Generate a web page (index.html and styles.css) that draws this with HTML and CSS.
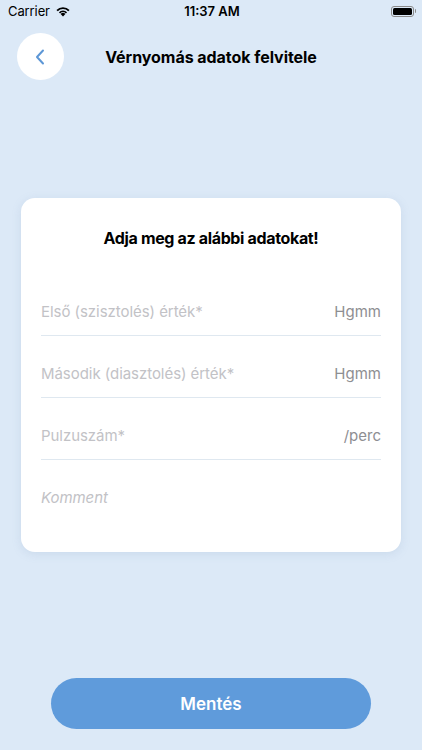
FILE: index.html
```html
<!DOCTYPE html>
<html lang="hu">
<head>
<meta charset="utf-8">
<title>Vérnyomás adatok felvitele</title>
<link rel="stylesheet" href="styles.css">
</head>
<body>
<div class="screen">
  <div class="status">
    <div class="status-left">
      <span class="carrier">Carrier</span>
      <svg class="wifi" width="16" height="12" viewBox="0 0 16 12">
        <path d="M8 11.5 L5.6 9 A3.4 3.4 0 0 1 10.4 9 Z" fill="#000"/>
        <path d="M3.9 7.3 A5.8 5.8 0 0 1 12.1 7.3 L10.9 8.5 A4.1 4.1 0 0 0 5.1 8.5 Z" fill="#000"/>
        <path d="M1.4 5 A9.2 9.2 0 0 1 14.6 5 L13.2 6.3 A7.3 7.3 0 0 0 2.8 6.3 Z" fill="#000"/>
      </svg>
    </div>
    <div class="time">11:37 AM</div>
    <div class="status-right">
      <div class="battery"><div class="battery-fill"></div></div>
      <div class="battery-nub"></div>
    </div>
  </div>

  <div class="header">
    <button class="back" aria-label="Vissza">
      <svg width="10" height="16" viewBox="0 0 10 16">
        <path d="M8 1.5 L2 8 L8 14.5" fill="none" stroke="#5d97d6" stroke-width="2" stroke-linecap="round" stroke-linejoin="round"/>
      </svg>
    </button>
    <h1 class="title">Vérnyomás adatok felvitele</h1>
    <div></div>
  </div>

  <div class="card">
    <h2 class="card-title">Adja meg az alábbi adatokat!</h2>
    <div class="field">
      <span class="placeholder">Első (szisztolés) érték*</span>
      <span class="unit">Hgmm</span>
    </div>
    <div class="field">
      <span class="placeholder">Második (diasztolés) érték*</span>
      <span class="unit">Hgmm</span>
    </div>
    <div class="field">
      <span class="placeholder">Pulzuszám*</span>
      <span class="unit">/perc</span>
    </div>
    <div class="field comment">
      <span class="placeholder italic">Komment</span>
    </div>
  </div>

  <button class="save">Mentés</button>
</div>
</body>
</html>
```

FILE: styles.css
```css
* { box-sizing: border-box; }
html, body { margin: 0; padding: 0; }
body {
  background: #dce9f7;
  font-family: Inter, "Liberation Sans", Arial, sans-serif;
  color: #000;
}
.screen {
  min-height: 750px;
  display: flex;
  flex-direction: column;
}
.status {
  height: 22px;
  display: grid;
  grid-template-columns: 1fr auto 1fr;
  align-items: center;
  padding: 0 6px 0 8px;
  font-size: 13px;
}
.status-left { display: flex; align-items: center; gap: 5px; }
.carrier { font-weight: 400; letter-spacing: -0.1px; }
.time { font-weight: 600; font-size: 13px; }
.status-right { display: flex; align-items: center; justify-content: flex-end; gap: 1px; }
.battery {
  width: 23px; height: 11px;
  border: 1px solid #8a8a8a;
  border-radius: 3px;
  padding: 1px;
}
.battery-fill { width: 100%; height: 100%; background: #000; border-radius: 1.5px; }
.battery-nub { width: 1.5px; height: 4px; background: #8a8a8a; border-radius: 0 1px 1px 0; }

.header {
  margin-top: 11px;
  display: grid;
  grid-template-columns: 1fr auto 1fr;
  align-items: center;
  padding: 0 17px;
}
.back {
  width: 47px; height: 47px;
  border-radius: 50%;
  border: none;
  background: #fff;
  display: flex; align-items: center; justify-content: center;
  padding: 0 2px 0 0;
}
.title {
  margin: 0;
  font-size: 16px;
  font-weight: 700;
  letter-spacing: -0.05px;
}

.card {
  margin: 118px 21px 0;
  background: #fff;
  border-radius: 14px;
  padding: 30px 20px 30px;
  box-shadow: 0 2px 10px rgba(120, 150, 190, 0.18);
}
.card-title {
  margin: 0 0 26px;
  text-align: center;
  font-size: 16px;
  line-height: 20px;
  font-weight: 700;
  letter-spacing: -0.35px;
}
.field {
  height: 62px;
  display: flex;
  align-items: flex-end;
  justify-content: space-between;
  padding-bottom: 14px;
  border-bottom: 1px solid #dfe8f0;
  font-size: 15px;
  line-height: 18px;
}
.field.comment { border-bottom: none; height: 62px; padding-bottom: 15px; }
.placeholder { color: #c2c2c6; letter-spacing: -0.05px; }
.placeholder.italic { font-style: italic; }
.unit { color: #8e8e92; }

.save {
  margin: auto auto 21px;
  width: 320px;
  height: 51px;
  border: none;
  border-radius: 26px;
  background: #5f9bdb;
  color: #fff;
  font-family: Inter, "Liberation Sans", Arial, sans-serif;
  font-size: 17px;
  font-weight: 600;
}
```
